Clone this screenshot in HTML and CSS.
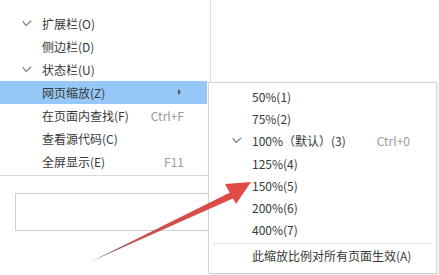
FILE: index.html
```html
<!DOCTYPE html>
<html lang="zh-CN">

<head>
    <meta charset="UTF-8">
    <title>网页缩放菜单</title>
    <link rel="stylesheet" href="styles.css">
</head>

<body>
    <div class="page">
        <div class="search-box"></div>
    </div>

    <ul class="menu main-menu">
        <li class="menu-item"><span class="check"><svg width="10" height="7" viewBox="0 0 10 7"><polyline points="0.7,1.2 4,5.5 9.3,0.7" /></svg></span><span class="label">扩展栏(O)</span></li>
        <li class="menu-item"><span class="check"></span><span class="label">侧边栏(D)</span></li>
        <li class="menu-item"><span class="check"><svg width="10" height="7" viewBox="0 0 10 7"><polyline points="0.7,1.2 4,5.5 9.3,0.7" /></svg></span><span class="label">状态栏(U)</span></li>
        <li class="menu-item active"><span class="check"></span><span class="label">网页缩放(Z)</span><span class="arrow"></span></li>
        <li class="menu-item"><span class="check"></span><span class="label">在页面内查找(F)</span><span class="shortcut">Ctrl+F</span></li>
        <li class="menu-item"><span class="check"></span><span class="label">查看源代码(C)</span></li>
        <li class="menu-item"><span class="check"></span><span class="label">全屏显示(E)</span><span class="shortcut">F11</span></li>
    </ul>

    <ul class="menu sub-menu">
        <li class="menu-item"><span class="check"></span><span class="label">50%(1)</span></li>
        <li class="menu-item"><span class="check"></span><span class="label">75%(2)</span></li>
        <li class="menu-item"><span class="check"><svg width="10" height="7" viewBox="0 0 10 7"><polyline points="0.7,1.2 4,5.5 9.3,0.7" /></svg></span><span class="label">100%（默认）(3)</span><span class="shortcut">Ctrl+0</span></li>
        <li class="menu-item"><span class="check"></span><span class="label">125%(4)</span></li>
        <li class="menu-item"><span class="check"></span><span class="label">150%(5)</span></li>
        <li class="menu-item"><span class="check"></span><span class="label">200%(6)</span></li>
        <li class="menu-item"><span class="check"></span><span class="label">400%(7)</span></li>
        <li class="separator"></li>
        <li class="menu-item"><span class="check"></span><span class="label">此缩放比例对所有页面生效(A)</span></li>
    </ul>

    <!-- annotation arrow drawn over the screenshot -->
    <svg class="pointer" width="439" height="275" viewBox="0 0 439 275">
        <defs>
            <linearGradient id="tail" x1="90" y1="262" x2="240" y2="186" gradientUnits="userSpaceOnUse">
                <stop offset="0" stop-color="#7a6a78" />
                <stop offset="0.35" stop-color="#c9524f" />
                <stop offset="1" stop-color="#e24a45" />
            </linearGradient>
        </defs>
        <polygon points="90,262 231,192 234,198" fill="url(#tail)" />
        <polygon points="251,182 225,184 236,204" fill="#e24a45" />
    </svg>
</body>

</html>
```

FILE: styles.css
```css
body {
    margin: 0;
    background: #ffffff;
    font-family: "Microsoft YaHei", "Noto Sans CJK SC", "Noto Sans", sans-serif;
    font-size: 12px;
    color: #383838;
    position: relative;
    width: 439px;
    height: 275px;
    overflow: hidden;
}

.page {
    padding: 193px 0 0 15px;
}

.search-box {
    width: 300px;
    height: 36px;
    border: 1px solid #cfcfcf;
    background: #ffffff;
}

.menu {
    list-style: none;
    margin: 0;
    position: absolute;
    background: #ffffff;
}

.main-menu {
    left: 0;
    top: 0;
    width: 211px;
    padding: 12px 0 2px 0;
    border-right: 1px solid #dcdcdc;
    border-bottom: 1px solid #d8d8d8;
    box-sizing: border-box;
}

.sub-menu {
    left: 208px;
    top: 82px;
    width: 229px;
    height: 192px;
    padding: 3px 0 0 0;
    border: 1px solid #d4d4d4;
    box-sizing: border-box;
    box-shadow: 1px 1px 3px rgba(0, 0, 0, 0.12);
}

.menu-item {
    display: flex;
    align-items: center;
    height: 23px;
    padding-bottom: 1px;
    box-sizing: border-box;
    white-space: nowrap;
}

.sub-menu .menu-item {
    height: 22.2px;
}

.main-menu .menu-item.active {
    background: #95c8f6;
    margin-right: 3px;
}

.check {
    display: flex;
    align-items: center;
    width: 42px;
    padding-left: 22px;
    box-sizing: border-box;
}

.check svg polyline {
    fill: none;
    stroke: #8a8a8a;
    stroke-width: 1.3;
}

.sub-menu .check {
    width: 43px;
    padding-left: 23px;
}

.label {
    flex: 1;
}

.shortcut {
    color: #9a9a9a;
    padding-right: 26px;
}

.arrow {
    width: 0;
    height: 0;
    border-top: 3px solid transparent;
    border-bottom: 3px solid transparent;
    border-left: 3px solid #555555;
    margin-right: 26px;
}

.separator {
    height: 1px;
    background: #e2e2e2;
    margin: 2px 4px 1px 4px;
}

.pointer {
    position: absolute;
    left: 0;
    top: 0;
}
```
